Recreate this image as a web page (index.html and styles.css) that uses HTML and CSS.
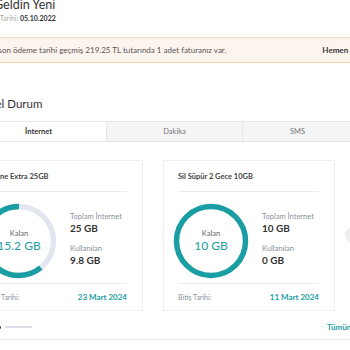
FILE: index.html
```html
<!DOCTYPE html>
<html lang="tr">
<head>
    <meta charset="UTF-8">
    <meta name="viewport" content="width=device-width, initial-scale=1.0">
    <title>Hesabım</title>
    <link rel="stylesheet" href="styles.css">
</head>
<body>

    <div class="page">
        <div class="welcome">
            <h1>Hoş Geldin Yeni</h1>
            <p class="since"><span>Üyelik Tarihi:</span> <b>05.10.2022</b></p>
        </div>

        <div class="alert">
            <p>Hesabınızda son ödeme tarihi geçmiş 219.25 TL tutarında 1 adet faturanız var.</p>
            <a href="#">Hemen Öde</a>
        </div>

        <h2 class="section-title">Güncel Durum</h2>

        <div class="tabs">
            <div class="tab active">İnternet</div>
            <div class="tab">Dakika</div>
            <div class="tab">SMS</div>
        </div>

        <div class="carousel">
            <div class="cards">
                <div class="card">
                    <div class="card-title">Online Extra 25GB</div>
                    <div class="card-body">
                        <div class="donut">
                            <svg width="76" height="76" viewBox="0 0 76 76">
                                <circle cx="38" cy="38" r="34.5" fill="none" stroke="#e3e6ee" stroke-width="5.5"/>
                                <g transform="translate(76 0) scale(-1 1) rotate(-90 38 38)">
                                    <circle cx="38" cy="38" r="34.5" fill="none" stroke="#1b9ea3" stroke-width="5.5" stroke-dasharray="131.8 300"/>
                                </g>
                            </svg>
                            <div class="donut-label">
                                <span>Kalan</span>
                                <strong>15.2 GB</strong>
                            </div>
                        </div>
                        <div class="stats">
                            <span>Toplam İnternet</span>
                            <strong>25 GB</strong>
                            <span>Kullanılan</span>
                            <strong>9.8 GB</strong>
                        </div>
                    </div>
                    <div class="card-foot">
                        <span>Bitiş Tarihi:</span>
                        <strong>23 Mart 2024</strong>
                    </div>
                </div>

                <div class="card">
                    <div class="card-title">Sil Süpür 2 Gece 10GB</div>
                    <div class="card-body">
                        <div class="donut">
                            <svg width="76" height="76" viewBox="0 0 76 76">
                                <circle cx="38" cy="38" r="34.5" fill="none" stroke="#1b9ea3" stroke-width="5.5"/>
                            </svg>
                            <div class="donut-label">
                                <span>Kalan</span>
                                <strong>10 GB</strong>
                            </div>
                        </div>
                        <div class="stats">
                            <span>Toplam İnternet</span>
                            <strong>10 GB</strong>
                            <span>Kullanılan</span>
                            <strong>0 GB</strong>
                        </div>
                    </div>
                    <div class="card-foot">
                        <span>Bitiş Tarihi:</span>
                        <strong>11 Mart 2024</strong>
                    </div>
                </div>
            </div>
            <button class="next" aria-label="Sonraki"></button>
        </div>

        <div class="carousel-foot">
            <div class="dots">
                <span class="dot"></span>
                <span class="bar"></span>
            </div>
            <a href="#">Tümünü Gör</a>
        </div>
    </div>

</body>
</html>
```

FILE: styles.css
```css
body {
    margin: 0;
    overflow: hidden;
    background-color: white;
    font-family: Lato, "Open Sans", sans-serif;
    color: #333;
}
.page {
    width: 400px;
    height: 340px;
    margin-left: -29px;
    border-bottom: 1px solid #ececec;
}
.welcome h1 {
    margin: -1px 0 0 -2px;
    font-size: 12.5px;
    line-height: 12px;
    font-weight: 400;
    color: #333;
}
.since {
    margin: 2px 0 0 8px;
    font-size: 7px;
    line-height: 10px;
}
.since span {
    color: #aaa;
}
.since b {
    color: #333;
}
.alert {
    display: flex;
    align-items: center;
    gap: 96px;
    margin-top: 14px;
    margin-left: -17px;
    width: 460px;
    height: 24px;
    background-color: #fef4ee;
    border-top: 1px solid #f6d7bf;
    border-bottom: 1px solid #f6d7bf;
}
.alert p {
    margin: 0;
    font-size: 8px;
    color: #555;
}
.alert a {
    font-size: 8px;
    font-weight: 700;
    color: #333;
    text-decoration: none;
}
.section-title {
    margin: 34px 0 0 -2px;
    font-size: 11.5px;
    line-height: 14px;
    font-weight: 400;
    color: #333;
}
.tabs {
    display: flex;
    margin-top: 10px;
    height: 21px;
}
.tab {
    width: 136px;
    display: flex;
    align-items: center;
    justify-content: center;
    font-size: 7.5px;
    color: #777;
    background-color: #f5f5f5;
    border: 1px solid #e6e6e6;
    border-left: none;
    box-sizing: border-box;
}
.tab:last-child {
    width: 110px;
}
.tab.active {
    background-color: white;
    color: #333;
    font-weight: 700;
}
.carousel {
    position: relative;
    margin-top: 18px;
}
.cards {
    display: flex;
    gap: 20px;
}
.card {
    width: 172px;
    height: 151px;
    box-sizing: border-box;
    padding: 0 15px 0 14px;
    border: 1px solid #efefef;
    display: flex;
    flex-direction: column;
}
.card-title {
    height: 30px;
    flex-shrink: 0;
    display: flex;
    align-items: center;
    font-size: 7.5px;
    font-weight: 700;
    color: #444;
    border-bottom: 1px solid #ececec;
}
.card-body {
    display: flex;
    align-items: flex-start;
    gap: 13px;
    height: 92px;
    box-sizing: border-box;
    padding-top: 11px;
    border-bottom: 1px solid #ececec;
}
.donut {
    position: relative;
    width: 76px;
    height: 76px;
    margin-left: -5px;
}
.donut svg {
    display: block;
}
.donut-label {
    position: absolute;
    inset: 0;
    display: flex;
    flex-direction: column;
    align-items: center;
    justify-content: center;
}
.donut-label span {
    font-size: 7.5px;
    line-height: 10px;
    color: #666;
}
.donut-label strong {
    font-size: 12px;
    line-height: 14px;
    font-weight: 400;
    color: #1b9ea3;
}
.stats {
    display: flex;
    flex-direction: column;
    padding-top: 8px;
    white-space: nowrap;
}
.stats span {
    font-size: 7.5px;
    line-height: 11px;
    color: #8a8f99;
}
.stats strong {
    font-size: 10px;
    line-height: 13px;
    font-weight: 700;
    color: #333;
    margin-bottom: 8px;
}
.card-foot {
    display: flex;
    justify-content: space-between;
    align-items: center;
    flex: 1;
}
.card-foot span {
    font-size: 7px;
    color: #8a8f99;
}
.card-foot strong {
    font-size: 8px;
    font-weight: 700;
    color: #1b9ea3;
}
.next {
    position: absolute;
    left: 374px;
    top: 66px;
    width: 20px;
    height: 18px;
    border-radius: 50%;
    border: none;
    background-color: #eeeeee;
}
.carousel-foot {
    display: flex;
    justify-content: space-between;
    align-items: center;
    margin-top: 11px;
    height: 10px;
}
.dots {
    display: flex;
    align-items: center;
    gap: 4px;
    margin-left: 27px;
}
.dot {
    width: 3px;
    height: 3px;
    border-radius: 50%;
    background-color: #333;
}
.bar {
    width: 27px;
    height: 2px;
    border-radius: 1px;
    background-color: #dcdce8;
}
.carousel-foot a {
    font-size: 8px;
    font-weight: 700;
    color: #1b9ea3;
    text-decoration: none;
}
```
